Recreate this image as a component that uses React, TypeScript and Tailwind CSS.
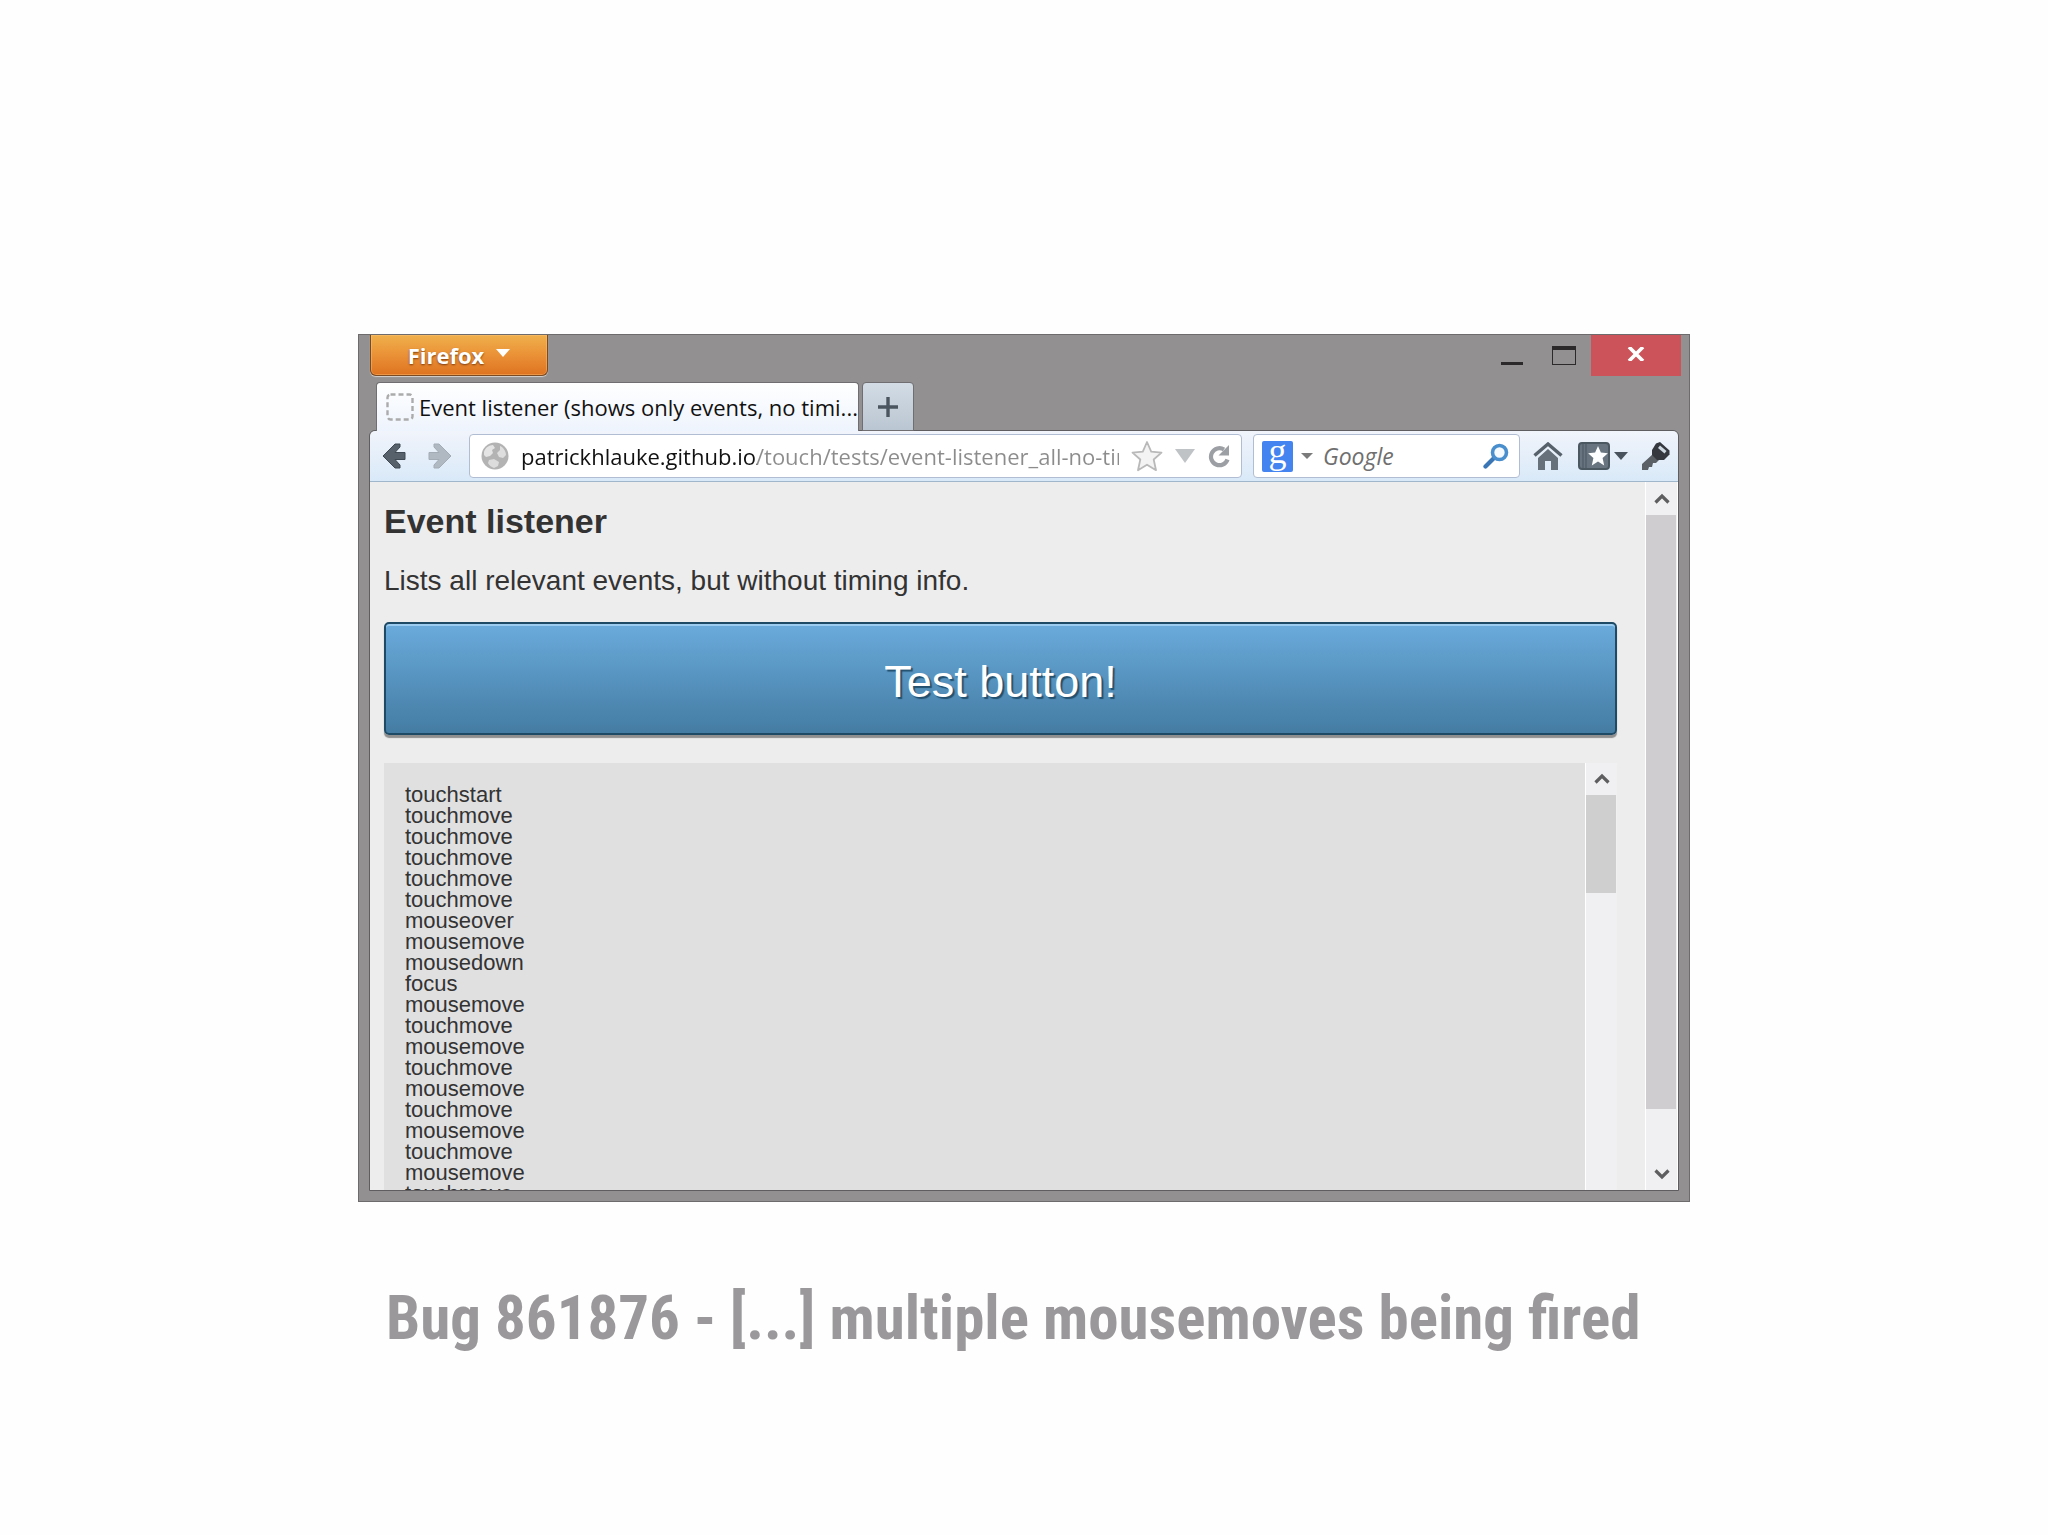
import React from "react";

const events = [
  "touchstart",
  "touchmove",
  "touchmove",
  "touchmove",
  "touchmove",
  "touchmove",
  "mouseover",
  "mousemove",
  "mousedown",
  "focus",
  "mousemove",
  "touchmove",
  "mousemove",
  "touchmove",
  "mousemove",
  "touchmove",
  "mousemove",
  "touchmove",
  "mousemove",
  "touchmove",
];

function BackIcon() {
  return (
    <svg viewBox="0 0 24 28" className="h-7 w-6">
      <path
        d="M1 14 13 2h5v3l-5 5.500h10v7H13l5 5.500v3h-5z"
        fill="#56616c"
        stroke="#3f4953"
        strokeWidth="1"
        strokeLinejoin="round"
      />
    </svg>
  );
}

function ForwardIcon() {
  return (
    <svg viewBox="0 0 24 28" className="h-7 w-6">
      <path
        d="M23 14 11 2H6v3l5 5.500H1v7h10L6 23v3h5z"
        fill="#b0b8c1"
        stroke="#a3abb5"
        strokeWidth="1"
        strokeLinejoin="round"
      />
    </svg>
  );
}

function GlobeIcon() {
  return (
    <svg viewBox="0 0 28 28" className="size-7 shrink-0">
      <circle cx="14" cy="14" r="13.500" fill="#b3b3b3" />
      <path d="M3 10c1-4 5-7 9-7l2 3-3 2 1 3-3 3-4 1-2-2z" fill="#e4e4e4" />
      <path d="M19 4c3 1 6 5 6 9l-3 3-4-1-2-4 3-3z" fill="#dedede" />
      <path d="M8 18l5-1 5 3-1 4-4 2c-3-1-5-3-6-5z" fill="#dcdcdc" />
    </svg>
  );
}

function StarIcon() {
  return (
    <svg viewBox="0 0 32 32" className="size-8">
      <path
        d="M16 2l4.200 9.600 10.300 1-7.800 6.900 2.300 10.700-9-5.500-9 5.500 2.300-10.700L1.500 12.600l10.300-1z"
        fill="#f3f3f3"
        stroke="#b9b9b9"
        strokeWidth="1.800"
        strokeLinejoin="round"
      />
    </svg>
  );
}

function ReloadIcon() {
  return (
    <svg viewBox="0 0 24 24" className="size-6">
      <path d="M20.500 15.500A8.500 8.500 0 1 1 17 5.500" fill="none" stroke="#9c9fa3" strokeWidth="4.200" />
      <path d="M22 1v10.500H11.500z" fill="#9c9fa3" />
    </svg>
  );
}

function SearchIcon() {
  return (
    <svg viewBox="0 0 26 26" className="size-[26px]">
      <path d="M12 14 2.500 23.500" stroke="#3a76b5" strokeWidth="4.200" strokeLinecap="round" />
      <circle cx="16.500" cy="9.500" r="7" fill="#f4fafe" stroke="#4a8fcd" strokeWidth="3.600" />
    </svg>
  );
}

function HomeIcon() {
  return (
    <svg viewBox="0 0 30 28" className="h-7 w-[30px]">
      <path d="M5 16 15 7l10 9v12h-7v-9h-6v9H5z" fill="#66717b" />
      <path d="M1.500 13.500 15 2l13.500 11.500" fill="none" stroke="#56616b" strokeWidth="3.400" />
    </svg>
  );
}

function BookmarksIcon() {
  return (
    <svg viewBox="0 0 32 28" className="h-7 w-8">
      <rect x="1" y="1" width="30" height="26" rx="3" fill="#68747f" stroke="#4b5761" strokeWidth="2" />
      <path d="M5 2v24M8 2v24" stroke="#4f5b66" strokeWidth="1.200" />
      <path d="M20 4l2.900 6.600 7 .7-5.300 4.800 1.600 7.300L20 19.600l-6.200 3.800 1.600-7.300-5.300-4.800 7-.7z" fill="#fbfdff" />
    </svg>
  );
}

function KeyIcon() {
  return (
    <svg viewBox="0 0 28 28" className="size-7">
      <path d="M11 12 0 22v6h6l1-3h3l1-4h3l4-4z" fill="#5b6067" />
      <path d="M14 1.500 18 0l9.500 8.500v4L22 18h-7l-5-5v-5z" fill="#35393f" />
      <path d="M18 3.500 24.500 9 22.500 11.500 16 6z" fill="#cfd9e2" />
    </svg>
  );
}

function Triangle({ className }: { className: string }) {
  return (
    <svg viewBox="0 0 14 8" className={className} preserveAspectRatio="none">
      <path d="M0 0h14L7 8z" fill="currentColor" />
    </svg>
  );
}

function ChevronUp() {
  return (
    <svg viewBox="0 0 16 12" className="h-3 w-4">
      <path d="M1.500 9.500 8 3l6.500 6.500" fill="none" stroke="#5e5e60" strokeWidth="3.200" />
    </svg>
  );
}

function ChevronDown() {
  return (
    <svg viewBox="0 0 16 12" className="h-3 w-4">
      <path d="M1.500 2.500 8 9l6.500-6.500" fill="none" stroke="#5e5e60" strokeWidth="3.200" />
    </svg>
  );
}

function TitleBar() {
  return (
    <div className="flex h-[41px] pr-2 pl-[11px]">
      <button className="flex w-[178px] items-center justify-center gap-3 rounded-b-md border border-t-0 border-[#7a4a22] bg-linear-to-b from-[#f0b04c] via-[#ea9136] to-[#de7320] text-[22px] leading-8 font-bold text-white shadow-[0_1px_1px_#d8d2cc,inset_0_0_0_1px_rgba(255,200,130,0.4)] text-shadow-[0_1px_2px_#7a3c10]">
        Firefox
        <Triangle className="mb-1 h-2 w-3.5" />
      </button>
      <div className="ml-auto flex">
        <button aria-label="Minimize" className="mr-[29px] flex w-[22px] items-end pb-[11px]">
          <span className="h-[3px] w-full bg-[#2b292a]" />
        </button>
        <button aria-label="Maximize" className="mr-[15px] flex items-end pb-[11px]">
          <span className="h-[19px] w-6 border border-t-4 border-[#2b292a]" />
        </button>
        <button aria-label="Close" className="flex w-[90px] items-center justify-center bg-[#cb5359]">
          <svg viewBox="0 0 18 14" className="mb-1 h-3.5 w-[18px]">
            <path d="M2 0 16 14M16 0 2 14" stroke="#fff" strokeWidth="3.600" />
          </svg>
        </button>
      </div>
    </div>
  );
}

function TabStrip() {
  return (
    <div role="tablist" className="relative z-10 mt-1.5 -mb-px flex h-[49px] gap-[3px] pl-[17px]">
      <button
        role="tab"
        aria-selected="true"
        className="flex w-[483px] items-center gap-[5px] rounded-t-sm border border-b-0 border-[#706e70] bg-linear-to-b from-white to-[#eef4fd] pl-[9px] text-[22px] leading-8 text-[#111]"
      >
        <svg viewBox="0 0 28 28" className="size-7 shrink-0">
          <rect
            x="1.500"
            y="1.500"
            width="25"
            height="25"
            rx="3"
            fill="none"
            stroke="#ababab"
            strokeWidth="2.400"
            strokeDasharray="5 3"
          />
        </svg>
        <span className="whitespace-nowrap">Event listener (shows only events, no timi...</span>
      </button>
      <button
        aria-label="Open a new tab"
        className="flex w-[52px] items-center justify-center rounded-t-sm border border-[#706e70] bg-linear-to-b from-[#d3dce5] to-[#bac6d2]"
      >
        <svg viewBox="0 0 20 20" className="size-5">
          <path d="M10 0v20M0 10h20" stroke="#4a5560" strokeWidth="3.400" />
        </svg>
      </button>
    </div>
  );
}

function Toolbar() {
  return (
    <div className="flex h-[51px] items-center rounded-t-sm border-b border-[#9fb6cb] bg-linear-to-b from-[#f1f4fb] to-[#d9e9f8] pr-2 pl-3">
      <button aria-label="Back" className="mr-[22px]">
        <BackIcon />
      </button>
      <button aria-label="Forward" className="mr-[17px]">
        <ForwardIcon />
      </button>
      <div className="mr-[11px] flex h-11 min-w-0 flex-1 items-center rounded-sm border border-[#b0bdd2] bg-white pr-2.5 pl-[11px]">
        <GlobeIcon />
        <input
          aria-label="Address"
          readOnly
          value="patrickhlauke.github.io/touch/tests/event-listener_all-no-timings.html"
          className="mr-3 ml-3 min-w-0 flex-1 bg-[linear-gradient(90deg,#111_236px,#8c8c8c_236px)] bg-clip-text text-[22px] leading-8 text-transparent outline-none"
        />
        <button aria-label="Bookmark this page" className="mr-3">
          <StarIcon />
        </button>
        <button aria-label="Show history" className="mr-3 text-[#c0c3c6]">
          <Triangle className="h-3.5 w-5" />
        </button>
        <button aria-label="Reload">
          <ReloadIcon />
        </button>
      </div>
      <div className="mr-[13px] flex h-11 w-[267px] items-center rounded-sm border border-[#b0bdd2] bg-white pr-2.5 pl-2">
        <button
          aria-label="Search engine"
          className="flex items-center gap-2 text-[#7b7b7b]"
        >
          <span className="flex size-[31px] items-center justify-center rounded-xs bg-[#4484f0] pb-2.5 font-['Liberation_Serif',serif] text-[36px] leading-7 text-white">
            g
          </span>
          <Triangle className="h-1.5 w-3" />
        </button>
        <input
          aria-label="Search"
          placeholder="Google"
          className="ml-2.5 min-w-0 flex-1 text-[23px] leading-8 italic outline-none placeholder:text-[#6f6f6f]"
        />
        <button aria-label="Go">
          <SearchIcon />
        </button>
      </div>
      <button aria-label="Home" className="mr-[15px]">
        <HomeIcon />
      </button>
      <button aria-label="Bookmarks" className="mr-3.5 flex items-center gap-1 text-[#48535d]">
        <BookmarksIcon />
        <Triangle className="h-2 w-3.5" />
      </button>
      <button aria-label="Passwords">
        <KeyIcon />
      </button>
    </div>
  );
}

function Page() {
  return (
    <div className="flex bg-[#eeedee] font-['Liberation_Sans',Arial,sans-serif] text-[#333]">
      <div className="min-w-0 flex-1 pt-[19px] pr-7 pl-3.5">
        <h1 className="text-[34px] leading-10 font-bold">Event listener</h1>
        <p className="mt-[22px] text-[28px] leading-9">Lists all relevant events, but without timing info.</p>
        <button className="mt-[23px] block h-[113px] w-full rounded-[5px] border-2 border-[#1f4a66] bg-linear-to-b from-[#6aabdc] to-[#447ca3] pt-1.5 text-[45px] leading-[48px] text-white shadow-[0_3px_1px_#8f8f8f,inset_0_2px_0_#9ccdf0] text-shadow-[2px_2px_1px_#23506e]">
          Test button!
        </button>
        <div className="mt-7 flex h-[427px] overflow-hidden">
          <ul className="flex-1 bg-[#e0e0e1] px-[21px] pt-[21px] text-[22px] leading-[21px]">
            {events.map((name, i) => (
              <li key={i}>{name}</li>
            ))}
          </ul>
          <div className="flex w-8 flex-col border-l border-white bg-[#f0f0f2]">
            <button aria-label="Scroll log up" className="flex h-8 items-center justify-center">
              <ChevronUp />
            </button>
            <div className="h-[98px] w-[30px] bg-[#cfcfcf]" />
          </div>
        </div>
      </div>
      <div className="flex w-[33px] flex-col border-x border-white bg-[#f0eff1]">
        <button aria-label="Scroll page up" className="flex h-[33px] items-center justify-center">
          <ChevronUp />
        </button>
        <div className="h-[594px] w-[30px] bg-[#cfcdcf]" />
        <button aria-label="Scroll page down" className="mt-auto flex h-[33px] items-center justify-center">
          <ChevronDown />
        </button>
      </div>
    </div>
  );
}

export default function App() {
  return (
    <main className="min-h-screen bg-[#fefefe] px-6 pt-[334px]">
      <div className="mx-auto w-full max-w-[1332px]">
        <section
          aria-label="Firefox window"
          className="border border-[#6d6b6c] bg-[#929091] pb-2.5 font-['Open_Sans','Noto_Sans',sans-serif]"
        >
          <TitleBar />
          <TabStrip />
          <div className="mx-2.5 overflow-hidden rounded-t-md border border-[#5f5d5f]">
            <Toolbar />
            <Page />
          </div>
        </section>
        <h2 className="mt-20 pl-7 font-['Roboto_Condensed','Liberation_Sans',sans-serif] text-[61px] leading-[72px] font-bold whitespace-nowrap text-[#9a989b]">
          Bug 861876 - [...] multiple mousemoves being fired
        </h2>
      </div>
    </main>
  );
}
